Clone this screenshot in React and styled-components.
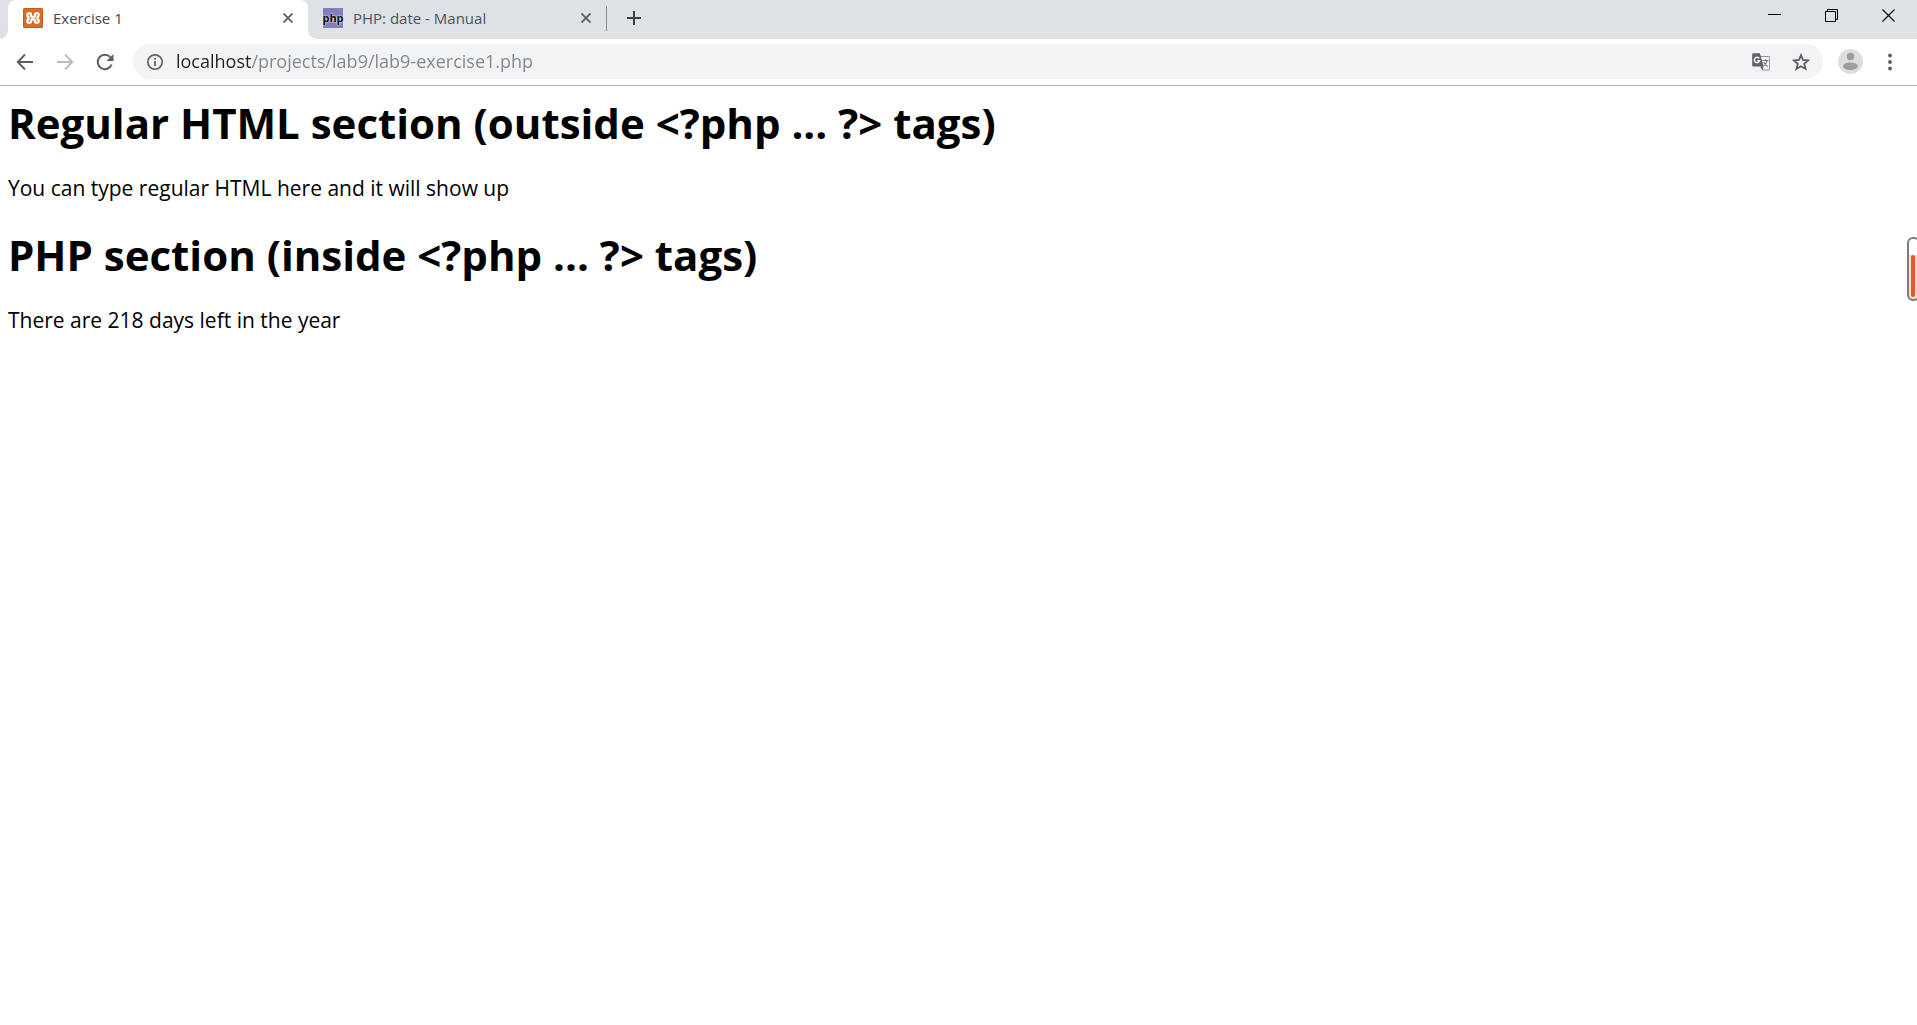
import React from "react";
import styled, { createGlobalStyle } from "styled-components";

const GlobalStyle = createGlobalStyle`
  *, *::before, *::after { box-sizing: border-box; }
  body {
    margin: 0;
    background: #fff;
    font-family: "Open Sans", "Noto Sans", sans-serif;
    overflow-x: hidden;
  }
  button { border: 0; padding: 0; background: none; font: inherit; color: inherit; }
  h1, p { margin: 0; }
`;

const Window = styled.div`
  display: flex;
  flex-direction: column;
  min-height: 100vh;
`;

const TitleBar = styled.header`
  display: flex;
  height: 39px;
  padding-left: 8px;
  background: #dee1e6;
`;

const TabList = styled.nav`
  display: flex;
  align-items: stretch;
`;

const Tab = styled.div`
  position: relative;
  display: flex;
  align-items: center;
  width: ${(p) => (p.$active ? 300 : 298)}px;
  padding: 0 14px 3px 15px;
  border-radius: 8px 8px 0 0;
  background: ${(p) => (p.$active ? "#fff" : "transparent")};
  color: ${(p) => (p.$active ? "#45484c" : "#505357")};

  &::before,
  &::after {
    content: "";
    display: ${(p) => (p.$active ? "block" : "none")};
    position: absolute;
    bottom: 0;
    width: 8px;
    height: 8px;
  }
  &::before {
    left: -8px;
    background: radial-gradient(circle at 0 0, transparent 7px, #fff 8px);
  }
  &::after {
    right: -8px;
    background: radial-gradient(circle at 100% 0, transparent 7px, #fff 8px);
  }
`;

const TabButton = styled.button`
  display: flex;
  flex: 1;
  align-items: center;
  gap: 10px;
  font-size: 15px;
  line-height: 20px;
  text-align: left;
  white-space: nowrap;
`;

const CloseButton = styled.button`
  display: flex;
  align-items: center;
  justify-content: center;
  width: 12px;
  height: 12px;
  color: #5a5d61;
`;

const PhpMark = styled.span`
  display: flex;
  align-items: center;
  justify-content: center;
  width: 20px;
  height: 20px;
  background: #7f80bd;
  color: #000;
  font-size: 11px;
  font-weight: 700;
  line-height: 16px;
  text-shadow: 0 0 2px #fff, 0 0 1px #fff;
`;

const Divider = styled.span`
  width: 1px;
  height: 25px;
  margin-top: 6px;
  background: #8a8d92;
`;

const NewTabButton = styled.button`
  display: flex;
  align-items: center;
  justify-content: center;
  width: 54px;
  height: 36px;
  color: #3c4043;
`;

const WindowControls = styled.div`
  display: flex;
  margin-left: auto;
`;

const WindowButton = styled.button`
  display: flex;
  align-items: center;
  justify-content: center;
  width: 57px;
  height: 31px;
  color: #000;
`;

const Toolbar = styled.div`
  display: flex;
  align-items: flex-start;
  height: 47px;
  padding: 5px 11px 0 5px;
  border-bottom: 1px solid #adafb1;
  background: #fff;
`;

const NavButtons = styled.div`
  display: flex;
  width: 128px;
`;

const ToolButton = styled.button`
  display: flex;
  align-items: center;
  justify-content: center;
  width: 40px;
  height: 35px;
  color: ${(p) => (p.$muted ? "#b9bbbe" : "#5a5d61")};
`;

const AddressBar = styled.div`
  display: flex;
  flex: 1;
  align-items: center;
  height: 35px;
  padding: 0 2px 0 13px;
  border-radius: 18px;
  background: #f1f3f4;
  color: #5f6368;
`;

const AddressInput = styled.input`
  flex: 1;
  min-width: 0;
  height: 28px;
  margin-left: 12px;
  padding: 0 0 2px;
  border: 0;
  outline: 0;
  font-family: inherit;
  font-size: 18px;
  line-height: 26px;
  color: #80868b;
  background: linear-gradient(to right, #202124 76px, #80868b 76px);
  -webkit-background-clip: text;
  background-clip: text;
  -webkit-text-fill-color: transparent;
`;

const ProfileButton = styled(ToolButton)`
  margin-left: 7px;
`;

const MenuButton = styled(ToolButton)`
  width: 32px;
  margin-left: 4px;
`;

const Page = styled.main`
  flex: 1;
  padding: 9px 8px;
  color: #000;
`;

const Section = styled.section`
  padding-bottom: 25px;
`;

const Heading = styled.h1`
  font-size: 42px;
  line-height: 56px;
  font-weight: 700;
`;

const Paragraph = styled.p`
  margin-top: 23px;
  font-size: 21px;
  line-height: 28px;
`;

const Gauge = styled.div`
  position: fixed;
  top: 237px;
  right: -3px;
  width: 13px;
  height: 64px;
  padding: 16px 3px 2px 2px;
  border: 2px solid #7d7d7d;
  border-radius: 6px;
  background: linear-gradient(#fff 16px, #fbdcd3 16px);
`;

const GaugeLevel = styled.div`
  width: 4px;
  height: 100%;
  border-radius: 2px;
  background: #e05a2b;
`;

const XamppIcon = () => (
  <svg width="20" height="20" viewBox="0 0 20 20" aria-hidden="true">
    <rect width="20" height="20" rx="1.5" fill="#dc6b26" />
    <rect x=".5" y=".5" width="19" height="19" rx="1.5" fill="none" stroke="#c95c1c" />
    <path
      d="M8 9V6.800Q8 5.200 6.200 5.200T4.300 7Q4.300 8.400 5.500 9.200V10.900Q4.300 11.700 4.300 13Q4.300 14.800 6.200 14.800T8 13.200V12.400Q8 11.500 9 11.500H11Q12 11.500 12 12.400V13.200Q12 14.800 13.800 14.800T15.700 13Q15.700 11.700 14.500 10.900V9.200Q15.700 8.400 15.700 7Q15.700 5.200 13.800 5.200T12 6.800V8.100Q12 8.900 11 8.900H8"
      fill="none"
      stroke="#fff"
      strokeWidth="2.300"
      strokeLinejoin="round"
    />
  </svg>
);

const CrossIcon = () => (
  <svg width="10" height="10" viewBox="0 0 10 10" stroke="currentColor" strokeWidth="1.8" aria-hidden="true">
    <path d="M.5.5l9 9M9.5.5l-9 9" />
  </svg>
);

const PlusIcon = () => (
  <svg width="14" height="14" viewBox="0 0 14 14" stroke="currentColor" strokeWidth="2" aria-hidden="true">
    <path d="M7 0v14M0 7h14" />
  </svg>
);

const MinimizeIcon = () => (
  <svg width="13" height="13" viewBox="0 0 13 13" stroke="currentColor" aria-hidden="true">
    <path d="M0 5.5h13" />
  </svg>
);

const RestoreIcon = () => (
  <svg width="13" height="13" viewBox="0 0 13 13" fill="none" stroke="currentColor" aria-hidden="true">
    <path d="M.5 2.5h10v10H.5zM2.5 2.5v-2h10v10h-2" />
  </svg>
);

const CloseIcon = () => (
  <svg width="13" height="13" viewBox="0 0 13 13" stroke="currentColor" strokeWidth="1.1" aria-hidden="true">
    <path d="M.5.5l12 12M12.500.5l-12 12" />
  </svg>
);

const ArrowIcon = ({ forward }) => (
  <svg width="18" height="18" viewBox="0 0 18 18" fill="none" stroke="currentColor" strokeWidth="1.800" aria-hidden="true">
    <path d={forward ? "M1 9h15M9 1.500L16.300 9L9 16.500" : "M17 9H2M9 1.500L1.700 9L9 16.500"} />
  </svg>
);

const ReloadIcon = () => (
  <svg width="18" height="18" viewBox="0 0 18 18" aria-hidden="true">
    <path d="M15.600 11.500A7.200 7.200 0 1 1 14.300 4.200" fill="none" stroke="currentColor" strokeWidth="2" />
    <path d="M17.500 1v7h-7z" fill="currentColor" />
  </svg>
);

const InfoIcon = () => (
  <svg width="18" height="18" viewBox="0 0 18 18" aria-hidden="true">
    <circle cx="9" cy="9" r="7.200" fill="none" stroke="currentColor" strokeWidth="1.700" />
    <path d="M8.100 8h1.800v5H8.100zM8.100 5h1.800v1.800H8.100z" fill="currentColor" />
  </svg>
);

const TranslateIcon = () => (
  <svg width="18" height="18" viewBox="0 0 18 18" aria-hidden="true">
    <path d="M8 3.500h9a.6.6 0 0 1 .6.6v12.300a.6.6 0 0 1-.6.6h-6.500z" fill="#f5f6f7" stroke="#85888b" strokeWidth=".9" />
    <path d="M1.200.3h6.600l4 13.200H1.200A1 1 0 0 1 .2 12.500v-11a1 1 0 0 1 1-1.200z" fill="#5f6368" />
    <path d="M8.200 13.500h3.500l-1.600 3.500z" fill="#5f6368" />
    <path d="M7.300 5.400A2.700 2.700 0 1 0 7.700 7.600H5.200" fill="none" stroke="#fff" strokeWidth="1.300" />
    <path d="M10.500 7.500h6M13.400 6.200v1.300M15.300 7.500c-.6 2.600-2 4.300-3.600 5.400M11.700 9c.8 2 2.300 3.500 4 4.400" fill="none" stroke="#74777b" strokeWidth="1.100" />
  </svg>
);

const StarIcon = () => (
  <svg width="18" height="18" viewBox="0 0 18 18" aria-hidden="true">
    <path
      d="M9 2.200l2 4.800 5.200.4-4 3.400 1.300 5.100L9 13.200l-4.500 2.700 1.300-5.100-4-3.400L7 7z"
      fill="none"
      stroke="currentColor"
      strokeWidth="1.800"
    />
  </svg>
);

const AvatarIcon = () => (
  <svg width="25" height="25" viewBox="0 0 25 25" aria-hidden="true">
    <circle cx="12.500" cy="12.500" r="12.500" fill="#dedede" />
    <circle cx="12.500" cy="7.500" r="3.700" fill="#9d9d9d" />
    <ellipse cx="12.500" cy="17.300" rx="7.300" ry="3.900" fill="#9d9d9d" />
  </svg>
);

const DotsIcon = () => (
  <svg width="4" height="18" viewBox="0 0 4 18" fill="currentColor" aria-hidden="true">
    <circle cx="2" cy="2.500" r="1.900" />
    <circle cx="2" cy="9" r="1.900" />
    <circle cx="2" cy="15.500" r="1.900" />
  </svg>
);

const sections = [
  {
    title: "Regular HTML section (outside <?php ... ?> tags)",
    body: "You can type regular HTML here and it will show up",
  },
  {
    title: "PHP section (inside <?php ... ?> tags)",
    body: "There are 218 days left in the year",
  },
];

export default function App() {
  return (
    <Window>
      <GlobalStyle />
      <TitleBar>
        <TabList aria-label="Tabs">
          <Tab $active>
            <TabButton type="button" aria-current="page">
              <XamppIcon />
              Exercise 1
            </TabButton>
            <CloseButton type="button" aria-label="Close tab">
              <CrossIcon />
            </CloseButton>
          </Tab>
          <Tab>
            <TabButton type="button">
              <PhpMark aria-hidden="true">php</PhpMark>
              PHP: date - Manual
            </TabButton>
            <CloseButton type="button" aria-label="Close tab">
              <CrossIcon />
            </CloseButton>
          </Tab>
          <Divider />
          <NewTabButton type="button" aria-label="New tab">
            <PlusIcon />
          </NewTabButton>
        </TabList>
        <WindowControls>
          <WindowButton type="button" aria-label="Minimize">
            <MinimizeIcon />
          </WindowButton>
          <WindowButton type="button" aria-label="Restore">
            <RestoreIcon />
          </WindowButton>
          <WindowButton type="button" aria-label="Close">
            <CloseIcon />
          </WindowButton>
        </WindowControls>
      </TitleBar>
      <Toolbar>
        <NavButtons>
          <ToolButton type="button" aria-label="Back">
            <ArrowIcon />
          </ToolButton>
          <ToolButton type="button" aria-label="Forward" $muted>
            <ArrowIcon forward />
          </ToolButton>
          <ToolButton type="button" aria-label="Reload">
            <ReloadIcon />
          </ToolButton>
        </NavButtons>
        <AddressBar>
          <InfoIcon />
          <AddressInput
            type="text"
            aria-label="Address"
            defaultValue="localhost/projects/lab9/lab9-exercise1.php"
            spellCheck={false}
          />
          <ToolButton type="button" aria-label="Translate this page">
            <TranslateIcon />
          </ToolButton>
          <ToolButton type="button" aria-label="Bookmark this page">
            <StarIcon />
          </ToolButton>
        </AddressBar>
        <ProfileButton type="button" aria-label="Profile">
          <AvatarIcon />
        </ProfileButton>
        <MenuButton type="button" aria-label="Menu">
          <DotsIcon />
        </MenuButton>
      </Toolbar>
      <Page>
        {sections.map((s) => (
          <Section key={s.title}>
            <Heading>{s.title}</Heading>
            <Paragraph>{s.body}</Paragraph>
          </Section>
        ))}
      </Page>
      <Gauge>
        <GaugeLevel />
      </Gauge>
    </Window>
  );
}
